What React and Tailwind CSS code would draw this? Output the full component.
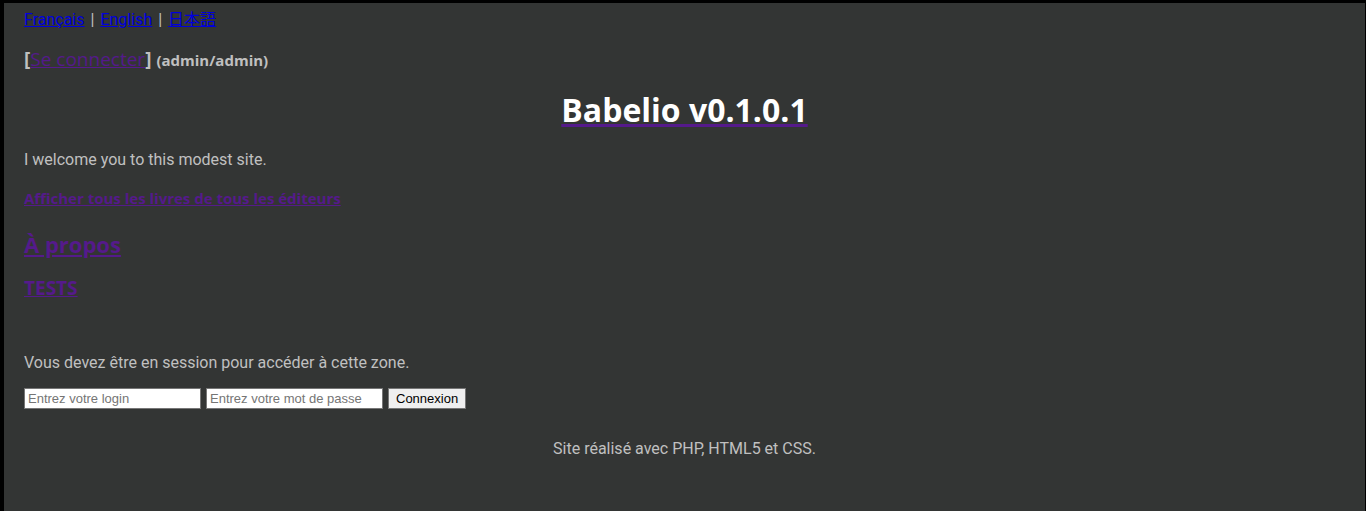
export default function App() {
  return (
    <div className="min-h-screen bg-black pt-[3px] pr-px pl-1 font-['Roboto','Noto_Sans_CJK_JP',sans-serif] text-[16px] leading-5 text-[#c0c0c0]">
      <div className="min-h-[508px] bg-[#333534] px-5 pt-[7px] pb-8">
        <nav className="flex gap-[6px]">
          <a href="#fr" className="text-[#0000dd] underline">Français</a>
          <span>|</span>
          <a href="#en" className="text-[#0000dd] underline">English</a>
          <span>|</span>
          <a href="#ja" lang="ja" className="text-[#0000dd] underline">日本語</a>
        </nav>
        <h3 className="mt-[17px] font-['Open_Sans',sans-serif] text-[19px] leading-6 font-bold">
          [<a href="#login" className="font-normal text-[#551a8b] underline">Se connecter</a>]{' '}
          <small className="text-[15px]">(admin/admin)</small>
        </h3>
        <h1 className="mt-5 text-center font-['Open_Sans',sans-serif] text-[32px] leading-9 font-bold">
          <a href="#home" className="text-white underline decoration-[#551a8b] decoration-3">Babelio v0.1.0.1</a>
        </h1>
        <p className="mt-[22px]">I welcome you to this modest site.</p>
        <h4 className="mt-[18px] font-['Open_Sans',sans-serif] text-[15px] font-bold">
          <a href="#books" className="text-[#551a8b] underline">Afficher tous les livres de tous les éditeurs</a>
        </h4>
        <h2 className="mt-[22px] font-['Open_Sans',sans-serif] text-[22px] leading-7 font-bold">
          <a href="#about" className="text-[#551a8b] underline">À propos</a>
        </h2>
        <h3 className="mt-[18px] font-['Open_Sans',sans-serif] text-[19px] leading-6 font-bold">
          <a href="#tests" className="text-[#551a8b] underline">TESTS</a>
        </h3>
        <p className="mt-[53px]">Vous devez être en session pour accéder à cette zone.</p>
        <form className="mt-[15px] flex flex-wrap gap-[5px] font-['Liberation_Sans',sans-serif] text-[13px] leading-[15px]" onSubmit={(e) => e.preventDefault()}>
          <input type="text" aria-label="Login" placeholder="Entrez votre login" className="h-[21px] w-[177px] border border-[#767676] bg-white px-[3px] text-black placeholder:text-[#757575]" />
          <input type="password" aria-label="Mot de passe" placeholder="Entrez votre mot de passe" className="h-[21px] w-[177px] border border-[#767676] bg-white px-[3px] text-black placeholder:text-[#757575]" />
          <button type="submit" className="h-[21px] border border-[#767676] bg-[#efefef] px-[7px] text-black">Connexion</button>
        </form>
        <footer className="mt-[30px] text-center">Site réalisé avec PHP, HTML5 et CSS.</footer>
      </div>
    </div>
  )
}
